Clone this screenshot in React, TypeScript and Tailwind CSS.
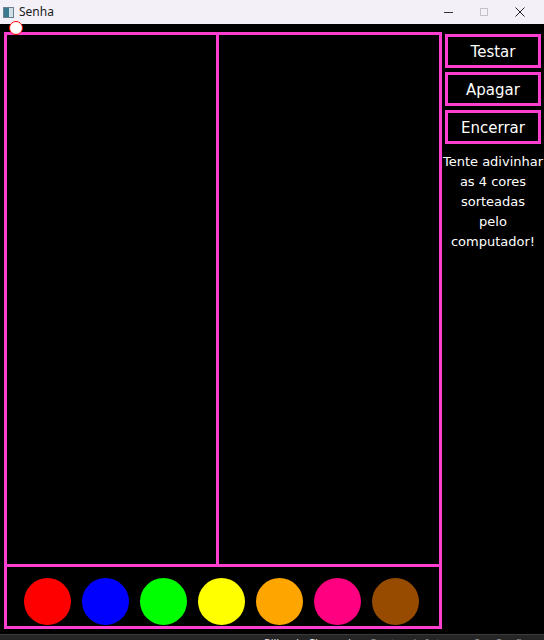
import React from "react";

const PINK = "border-[#ff3fd0]";

export default function App() {
  const colors = ["#ff0000", "#0000ff", "#00ff00", "#ffff00", "#ffa500", "#ff0080", "#964b00"];
  return (
    <div className="w-[544px] h-[640px] bg-black flex flex-col overflow-hidden" style={{ fontFamily: '"DejaVu Sans", sans-serif' }}>
      {/* title bar */}
      <div className="h-[24px] bg-[#f3f0f8] flex items-center relative shrink-0">
        <div className="ml-[3px] w-[11px] h-[11px] border border-[#6b7f8f] bg-[#e8eef2] flex">
          <div className="w-[5px] h-full bg-[#3a7a8c]" />
          <div className="flex-1 bg-[#cfe0e8]" />
        </div>
        <span className="ml-[5px] text-[12px] text-[#1a1a1a] leading-none" style={{ fontFamily: '"Noto Sans", "Open Sans", sans-serif' }}>Senha</span>
        <div className="ml-auto flex items-center h-full">
          <div className="w-[36px] flex justify-center">
            <div className="w-[9px] h-[1px] bg-[#333]" />
          </div>
          <div className="w-[36px] flex justify-center">
            <div className="w-[8px] h-[8px] border border-[#c4c4c8]" />
          </div>
          <div className="w-[36px] flex justify-center mr-[6px]">
            <svg width="10" height="10" viewBox="0 0 10 10">
              <path d="M0.5 0.5 L9.5 9.5 M9.5 0.5 L0.5 9.5" stroke="#222" strokeWidth="1" />
            </svg>
          </div>
        </div>
      </div>

      {/* main */}
      <div className="flex-1 flex items-start relative">
        <div className="absolute left-[9px] top-[-3px] w-[14px] h-[14px] rounded-full bg-white border-[1.5px] border-[#ff0000] z-10" />
        <div className={`mt-[8px] ml-[4px] w-[438px] h-[597px] border-[3px] ${PINK} flex flex-col`}>
          <div className="flex-1 flex">
            <div className={`w-[212px] border-r-[3px] ${PINK}`} />
            <div className="flex-1" />
          </div>
          <div className={`h-[62px] border-t-[3px] ${PINK} flex items-start pt-[11px] pl-[17px] gap-[11px]`}>
            {colors.map((c) => (
              <div key={c} className="w-[47px] h-[47px] rounded-full" style={{ backgroundColor: c }} />
            ))}
          </div>
        </div>
        <div className="w-[102px] mt-[10px] flex flex-col items-center">
          <div className="w-[96px] flex flex-col gap-[4px]">
            {["Testar", "Apagar", "Encerrar"].map((t) => (
              <div key={t} className={`h-[34px] pt-[2px] border-[3px] ${PINK} flex items-center justify-center text-white text-[15px]`}>
                {t}
              </div>
            ))}
          </div>
          <div className="mt-[8px] text-white text-[13px] leading-[20px] text-center whitespace-nowrap">
            Tente adivinhar<br />as 4 cores<br />sorteadas<br />pelo<br />computador!
          </div>
        </div>
      </div>

      {/* bottom strip */}
      <div className="h-[6px] shrink-0 bg-[#252526] border-t border-[#3c3c3c] overflow-hidden relative">
        <div className="absolute left-[264px] top-[1px] flex gap-[8px] text-[11px] leading-[13px] whitespace-nowrap" style={{ fontFamily: '"Noto Sans", sans-serif' }}>
          <span className="text-[#e0e0e0]">Pilha de Chamadas</span>
          <span className="text-[#8a8a8a]">Pontos de Interrupção</span>
          <span className="text-[#8a8a8a]">Configurações de Exceção</span>
        </div>
      </div>
    </div>
  );
}
